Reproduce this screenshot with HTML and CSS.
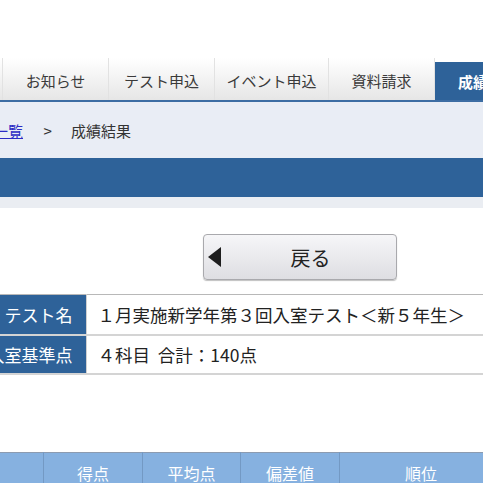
FILE: index.html
```html
<!DOCTYPE html>
<html lang="ja">
<head>
    <meta charset="UTF-8">
    <meta name="viewport" content="width=device-width, initial-scale=1.0">
    <title>成績結果</title>
    <link rel="stylesheet" href="styles.css">
</head>
<body>
    <div class="page">
        <div class="header"></div>

        <ul class="nav">
            <li class="tab">マイページ</li>
            <li class="tab">お知らせ</li>
            <li class="tab">テスト申込</li>
            <li class="tab wide">イベント申込</li>
            <li class="tab">資料請求</li>
            <li class="tab active">成績照会</li>
        </ul>

        <div class="breadcrumb">
            <a href="#">成績一覧</a>
            <span class="sep">&gt;</span>
            <span>成績結果</span>
        </div>

        <div class="band"></div>
        <div class="strip"></div>

        <div class="back-row">
            <button class="back-btn">
                <span class="arrow"></span>
                <span class="label">戻る</span>
            </button>
        </div>

        <table class="info">
            <tr>
                <th>テスト名</th>
                <td>１月実施新学年第３回入室テスト＜新５年生＞</td>
            </tr>
            <tr>
                <th>入室基準点</th>
                <td>４科目&nbsp;&nbsp;合計：140点</td>
            </tr>
        </table>

        <table class="scores">
            <tr>
                <th class="c0"></th>
                <th class="c1">得点</th>
                <th class="c2">平均点</th>
                <th class="c3">偏差値</th>
                <th class="c4">順位</th>
            </tr>
        </table>
    </div>
</body>
</html>
```

FILE: styles.css
```css
html, body {
    margin: 0;
    padding: 0;
    overflow: hidden;
    background: #fff;
}
body {
    font-family: "Noto Sans CJK JP", "Noto Sans", sans-serif;
    color: #333;
}
.page {
    width: 806px;
    margin-left: -103px;
}
.header {
    height: 58px;
}
.nav {
    display: flex;
    list-style: none;
    margin: 0;
    padding: 0;
    height: 42px;
    border-bottom: 2px solid #3d6da3;
}
.tab {
    width: 106px;
    box-sizing: border-box;
    border-right: 1px solid #e2e2e2;
    background: linear-gradient(#ffffff, #e6e6e6);
    font-size: 15px;
    line-height: 45px;
    text-align: center;
    color: #3a3a3a;
}
.tab.wide {
    width: 114px;
}
.tab.active {
    margin-top: 4px;
    line-height: 39px;
    background: #2e6299;
    color: #fff;
    font-weight: bold;
    border-right: none;
}
.breadcrumb {
    height: 56px;
    line-height: 58px;
    background: #e9edf5;
    padding-left: 66px;
    font-size: 15px;
    color: #333;
}
.breadcrumb a {
    color: #2b2bc4;
}
.breadcrumb .sep {
    margin: 0 16px 0 17px;
}
.band {
    height: 39px;
    background: #2e6299;
}
.strip {
    height: 11px;
    background: #eaedf2;
}
.back-row {
    padding-top: 26px;
}
.back-btn {
    display: flex;
    align-items: center;
    width: 194px;
    height: 46px;
    margin: 0 auto;
    padding: 0 0 0 4px;
    border: 1px solid #a9a9ad;
    border-radius: 4px;
    background: linear-gradient(#f6f6f8, #dedee2);
    box-shadow: 0 1px 1px rgba(0, 0, 0, 0.25);
    font-family: inherit;
    cursor: pointer;
}
.back-btn .arrow {
    width: 0;
    height: 0;
    border-top: 10px solid transparent;
    border-bottom: 10px solid transparent;
    border-right: 13px solid #1e1e1e;
}
.back-btn .label {
    flex: 1;
    text-align: center;
    font-size: 20px;
    color: #222;
    padding-left: 4px;
}
.info {
    border-collapse: collapse;
    margin: 14px 0 0 60px;
    width: 746px;
    border-top: 1px solid #b8b8b8;
}
.info th {
    width: 129px;
    box-sizing: border-box;
    background: #2e6299;
    color: #fff;
    font-weight: normal;
    font-size: 17px;
    text-align: right;
    padding: 0 13px 0 0;
    border-bottom: 2px solid #d4d4d4;
    border-right: 1px solid #d0d0d0;
}
.info td {
    font-size: 17.5px;
    color: #222;
    padding: 0 0 0 11px;
    border-bottom: 2px solid #d4d4d4;
}
.info tr:first-child th,
.info tr:first-child td {
    height: 39px;
}
.info tr + tr th,
.info tr + tr td {
    height: 37px;
}
.scores {
    border-collapse: collapse;
    margin: 77px 0 0 60px;
    border-top: 1px solid #8c9bb0;
}
.scores th {
    height: 40px;
    background: #86b1e0;
    color: #fff;
    font-weight: normal;
    font-size: 16px;
    border-left: 1px solid #7399c4;
    padding: 0;
}
.scores .c0 { width: 86px; border-left: none; }
.scores .c1 { width: 98px; }
.scores .c2 { width: 97px; }
.scores .c3 { width: 98px; }
.scores .c4 { width: 162px; }
```
